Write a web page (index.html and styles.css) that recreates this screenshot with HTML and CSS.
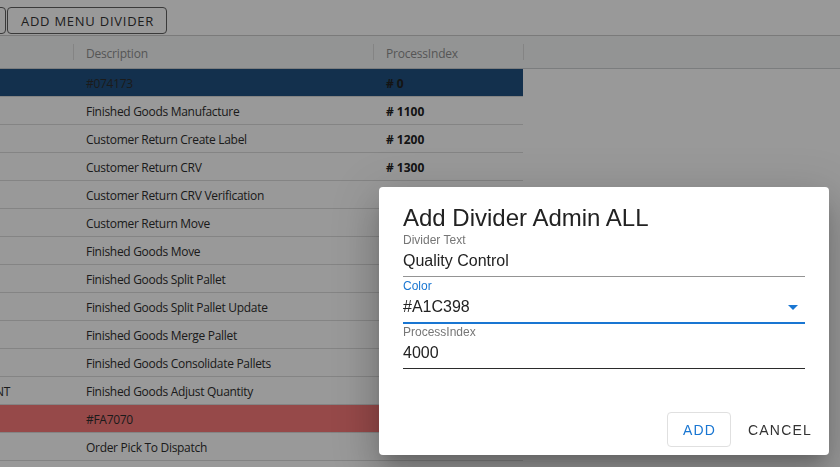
FILE: index.html
```html
<!DOCTYPE html>
<html>
<head>
<meta charset="utf-8">
<link rel="stylesheet" href="styles.css">
</head>
<body>
<div class="page">
  <div class="toolbar">
    <button class="tbtn prev">ADD MENU</button>
    <button class="tbtn">ADD MENU DIVIDER</button>
  </div>
  <div class="grid-head">
    <div class="hc c1"></div>
    <div class="hc c2 sep">Description</div>
    <div class="hc c3 sep">ProcessIndex</div>
    <div class="hc c4 sep"></div>
  </div>
  <div class="rows">
    <div class="row divider-blue"><div class="cell c1"></div><div class="cell c2">#074173</div><div class="cell c3 idx"># 0</div></div>
    <div class="row"><div class="cell c1"></div><div class="cell c2">Finished Goods Manufacture</div><div class="cell c3 idx"># 1100</div></div>
    <div class="row"><div class="cell c1"></div><div class="cell c2">Customer Return Create Label</div><div class="cell c3 idx"># 1200</div></div>
    <div class="row"><div class="cell c1"></div><div class="cell c2">Customer Return CRV</div><div class="cell c3 idx"># 1300</div></div>
    <div class="row"><div class="cell c1"></div><div class="cell c2">Customer Return CRV Verification</div><div class="cell c3 idx"># 1400</div></div>
    <div class="row"><div class="cell c1"></div><div class="cell c2">Customer Return Move</div><div class="cell c3 idx"># 1500</div></div>
    <div class="row"><div class="cell c1"></div><div class="cell c2">Finished Goods Move</div><div class="cell c3 idx"># 2100</div></div>
    <div class="row"><div class="cell c1"></div><div class="cell c2">Finished Goods Split Pallet</div><div class="cell c3 idx"># 2200</div></div>
    <div class="row"><div class="cell c1"></div><div class="cell c2">Finished Goods Split Pallet Update</div><div class="cell c3 idx"># 2300</div></div>
    <div class="row"><div class="cell c1"></div><div class="cell c2">Finished Goods Merge Pallet</div><div class="cell c3 idx"># 2400</div></div>
    <div class="row"><div class="cell c1"></div><div class="cell c2">Finished Goods Consolidate Pallets</div><div class="cell c3 idx"># 2500</div></div>
    <div class="row"><div class="cell c1 clip"><span>ADJUSTMENT</span></div><div class="cell c2">Finished Goods Adjust Quantity</div><div class="cell c3 idx"># 2600</div></div>
    <div class="row divider-red"><div class="cell c1"></div><div class="cell c2">#FA7070</div><div class="cell c3 idx"># 3000</div></div>
    <div class="row"><div class="cell c1"></div><div class="cell c2">Order Pick To Dispatch</div><div class="cell c3 idx"># 3100</div></div>
  </div>
</div>
<div class="backdrop"></div>
<div class="dialog">
  <h2 class="dlg-title">Add Divider Admin ALL</h2>
  <div class="dlg-content">
    <div class="field f1">
      <div class="label">Divider Text</div>
      <div class="input">Quality Control</div>
    </div>
    <div class="field f2 focused">
      <div class="label">Color</div>
      <div class="input select"><span>#A1C398</span>
        <svg class="arrow" width="10" height="5" viewBox="0 0 10 5"><path d="M0 0L5 5L10 0Z" fill="#1976d2"/></svg>
      </div>
    </div>
    <div class="field f3">
      <div class="label">ProcessIndex</div>
      <div class="input hover">4000</div>
    </div>
  </div>
  <div class="dlg-actions">
    <button class="btn outlined">ADD</button>
    <button class="btn text">CANCEL</button>
  </div>
</div>
</body>
</html>
```
FILE: styles.css
```css
html, body {
  margin: 0;
  padding: 0;
  background: #ffffff;
  width: 840px;
  height: 467px;
  overflow: hidden;
}
body {
  font-family: "Open Sans", "Noto Sans", sans-serif;
  color: #333333;
}
.page {
  width: 840px;
}
.toolbar {
  height: 35px;
  box-sizing: border-box;
  padding-top: 7px;
  display: flex;
  align-items: flex-start;
}
.tbtn {
  box-sizing: border-box;
  height: 27px;
  width: 160px;
  border: 1px solid #616161;
  border-radius: 4px;
  background: transparent;
  color: #333;
  font-family: "Open Sans", "Noto Sans", sans-serif;
  font-size: 13px;
  letter-spacing: 0.75px;
  padding: 0 0 0 1px;
  margin: 0 0 0 1px;
  white-space: nowrap;
  overflow: hidden;
}
.tbtn.prev {
  width: 100px;
  margin-left: -94px;
}
.grid-head {
  display: flex;
  height: 34px;
  box-sizing: border-box;
  border-top: 1px solid #cccccc;
  border-bottom: 1px solid #cdd0d2;
  background: #f5f7f7;
}
.hc {
  box-sizing: border-box;
  height: 32px;
  display: flex;
  align-items: center;
  padding-left: 13px;
  padding-top: 2px;
  font-size: 12px;
  letter-spacing: -0.2px;
  color: #8f8f8f;
  position: relative;
}
.hc.sep::before {
  content: "";
  position: absolute;
  left: 0;
  top: 8px;
  width: 1px;
  height: 16px;
  background: #dcdcdc;
}
.c1 { width: 73px; flex: none; box-sizing: border-box; }
.c2 { width: 300px; flex: none; box-sizing: border-box; }
.c3 { width: 150px; flex: none; box-sizing: border-box; }
.c4 { flex: 1; }
.rows {
  width: 523px;
}
.row {
  display: flex;
  height: 28px;
  box-sizing: border-box;
  border-bottom: 1px solid #dddddd;
}
.cell {
  line-height: 24px;
  padding-top: 3px;
  font-size: 12px;
  letter-spacing: -0.3px;
  padding-left: 13px;
  white-space: nowrap;
  overflow: hidden;
  color: #2e2e2e;
}
.cell.idx {
  font-weight: 700;
  letter-spacing: 0;
  color: #222222;
}
.cell.clip {
  display: flex;
  justify-content: flex-end;
  padding-left: 0;
  padding-right: 63px;
}
.cell.clip span {
  flex: none;
}
.divider-blue {
  background: #205080;
}
.divider-red {
  background: #fa7a7a;
}
.backdrop {
  position: fixed;
  inset: 0;
  background: rgba(0, 0, 0, 0.4);
}
.dialog {
  position: absolute;
  left: 379px;
  top: 187px;
  width: 450px;
  height: 268px;
  box-sizing: border-box;
  background: #ffffff;
  border-radius: 4px;
  box-shadow: 0 11px 15px -7px rgba(0,0,0,0.2), 0 24px 38px 3px rgba(0,0,0,0.14), 0 9px 46px 8px rgba(0,0,0,0.12);
  display: flex;
  flex-direction: column;
  padding-top: 17px;
  font-family: "Liberation Sans", Arial, sans-serif;
}
.dlg-title {
  margin: 0;
  padding: 0 24px;
  font-size: 24px;
  line-height: 28px;
  font-weight: 400;
  color: #222222;
}
.dlg-content {
  padding: 0 24px;
  flex: 1;
}
.field {
  border-bottom: 1px solid #949494;
}
.field.f1 { margin-top: 1px; }
.field.f2 { margin-top: 2px; border-bottom: 2px solid #1976d2; }
.field.f3 { margin-top: 1px; border-bottom-color: #2b2b2b; }
.label {
  font-size: 12px;
  line-height: 14px;
  color: #767676;
}
.focused .label {
  color: #1976d2;
}
.input {
  margin-top: 4px;
  font-size: 16px;
  line-height: 19px;
  padding-bottom: 6px;
  color: #222222;
}
.input.select {
  display: flex;
  align-items: center;
  justify-content: space-between;
}
.arrow {
  margin-right: 7px;
  margin-top: 1px;
}
.dlg-actions {
  display: flex;
  justify-content: flex-end;
  padding: 8px 9px 8px 8px;
}
.btn {
  height: 35px;
  box-sizing: border-box;
  font-family: "Liberation Sans", Arial, sans-serif;
  font-size: 14px;
  letter-spacing: 1.2px;
  background: #ffffff;
  border-radius: 4px;
  cursor: pointer;
  margin: 0;
}
.btn.outlined {
  width: 64px;
  padding: 0 0 0 1px;
  border: 1px solid #e0e0e0;
  color: #1976d2;
}
.btn.text {
  border: none;
  padding: 0 8px;
  margin-left: 9px;
  color: #333333;
}
```
